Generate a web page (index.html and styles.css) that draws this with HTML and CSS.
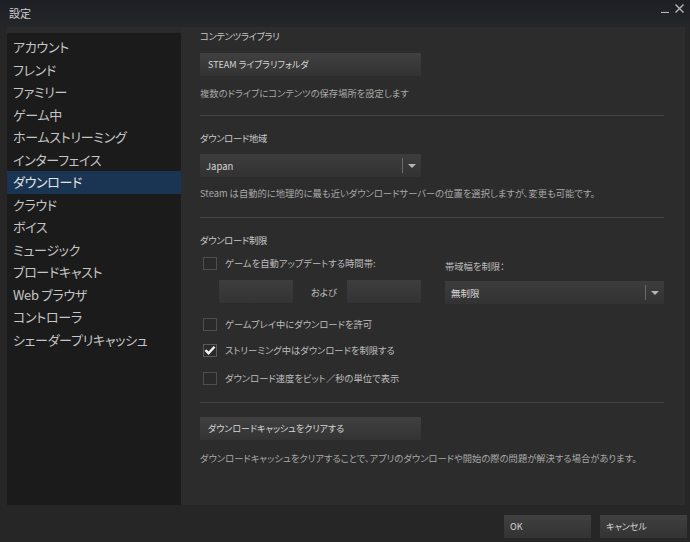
FILE: index.html
```html
<!DOCTYPE html>
<html lang="ja">
<head>
    <meta charset="UTF-8">
    <title>設定</title>
    <link rel="stylesheet" href="styles.css">
</head>
<body>
    <div class="window">
        <div class="titlebar">
            <span class="title">設定</span>
            <div class="win-btns">
                <svg width="9" height="9" viewBox="0 0 9 9"><path d="M0 8.5h8" stroke="#b8b8b8" stroke-width="1.2"/></svg>
                <svg width="9" height="9" viewBox="0 0 9 9"><path d="M0.5 0.5l8 8M8.5 0.5l-8 8" stroke="#b8b8b8" stroke-width="1.4"/></svg>
            </div>
        </div>

        <div class="main">
            <div class="sidebar">
                <div class="sidebar-top"></div>
                <ul class="menu">
                    <li>アカウント</li>
                    <li>フレンド</li>
                    <li>ファミリー</li>
                    <li>ゲーム中</li>
                    <li>ホームストリーミング</li>
                    <li>インターフェイス</li>
                    <li class="active">ダウンロード</li>
                    <li>クラウド</li>
                    <li>ボイス</li>
                    <li>ミュージック</li>
                    <li>ブロードキャスト</li>
                    <li>Web ブラウザ</li>
                    <li>コントローラ</li>
                    <li>シェーダープリキャッシュ</li>
                </ul>
            </div>

            <div class="content">
                <div class="heading">コンテンツライブラリ</div>
                <div class="btn wide-btn first-btn">STEAM ライブラリフォルダ</div>
                <div class="desc">複数のドライブにコンテンツの保存場所を設定します</div>
                <div class="rule"></div>

                <div class="heading">ダウンロード地域</div>
                <div class="select region-select">
                    <span>Japan</span>
                    <span class="select-arrow"></span>
                </div>
                <div class="desc">Steam は自動的に地理的に最も近いダウンロードサーバーの位置を選択しますが、変更も可能です。</div>
                <div class="rule"></div>

                <div class="heading">ダウンロード制限</div>
                <div class="limits">
                    <div class="limits-left">
                        <div class="check-row">
                            <span class="checkbox"></span>
                            ゲームを自動アップデートする時間帯:
                        </div>
                        <div class="time-row">
                            <span class="time-input"></span>
                            <span class="and">および</span>
                            <span class="time-input"></span>
                        </div>
                        <div class="check-row row2">
                            <span class="checkbox"></span>
                            ゲームプレイ中にダウンロードを許可
                        </div>
                        <div class="check-row row3">
                            <span class="checkbox checked">
                                <svg width="12" height="10" viewBox="0 0 12 10"><path d="M1.5 5.2l3 3 6-6.5" fill="none" stroke="#f2f2f2" stroke-width="2.4"/></svg>
                            </span>
                            ストリーミング中はダウンロードを制限する
                        </div>
                        <div class="check-row row4">
                            <span class="checkbox"></span>
                            ダウンロード速度をビット／秒の単位で表示
                        </div>
                    </div>
                    <div class="limits-right">
                        <div class="label">帯域幅を制限：</div>
                        <div class="select bw-select">
                            <span>無制限</span>
                            <span class="select-arrow"></span>
                        </div>
                    </div>
                </div>
                <div class="rule rule-bottom"></div>

                <div class="btn wide-btn cache-btn">ダウンロードキャッシュをクリアする</div>
                <div class="desc cache-desc">ダウンロードキャッシュをクリアすることで、アプリのダウンロードや開始の際の問題が解決する場合があります。</div>
            </div>
        </div>

        <div class="footer">
            <div class="btn footer-btn">OK</div>
            <div class="btn footer-btn">キャンセル</div>
        </div>
    </div>
</body>
</html>
```

FILE: styles.css
```css
* {
    margin: 0;
    padding: 0;
    box-sizing: border-box;
}

body {
    background: #262626;
    font-family: "Noto Sans CJK JP", "Noto Sans", sans-serif;
    font-feature-settings: "palt";
    color: #c4c4c4;
}

.window {
    width: 690px;
    height: 542px;
    display: flex;
    flex-direction: column;
    background: #262626;
}

.titlebar {
    height: 27px;
    flex-shrink: 0;
    display: flex;
    align-items: center;
    justify-content: space-between;
    padding: 0 6px 0 9px;
    background: linear-gradient(#1d1f24, #24262a);
}

.title {
    font-size: 11px;
    color: #d0d0d0;
    margin-top: -2px;
}

.win-btns {
    display: flex;
    gap: 5px;
    align-items: flex-end;
    margin-top: -10px;
}

.main {
    height: 478px;
    display: flex;
    padding: 0 5px 0 7px;
}

.sidebar {
    width: 174px;
    background: #1b1b1b;
    flex-shrink: 0;
}

.sidebar-top {
    height: 6px;
    background: #2a2a2a;
}

.menu {
    list-style: none;
    padding-top: 3px;
}

.menu li {
    height: 22.5px;
    line-height: 22.5px;
    padding-left: 6px;
    font-size: 13px;
    letter-spacing: -0.3px;
    color: #c6c6c6;
    white-space: nowrap;
}

.menu li.active {
    background: #1a3553;
    color: #e6e6e6;
}

.content {
    flex: 1;
    background: #2c2c2c;
    padding: 2px 21px 0 19px;
}

.heading,
.desc,
.label,
.check-row {
    font-size: 9.3px;
    line-height: 14px;
    white-space: nowrap;
}

.heading {
    color: #c8c8c8;
    letter-spacing: -0.3px;
}

.desc {
    color: #a8a8a8;
    margin-top: 10px;
}

.rule {
    height: 1px;
    background: #434343;
    margin: 15px 0 15px;
}

.btn {
    height: 23px;
    line-height: 23px;
    padding-left: 8px;
    font-size: 9px;
    color: #d6d6d6;
    background: linear-gradient(#404040, #333333);
}

.wide-btn {
    width: 221px;
}

.first-btn {
    margin-top: 10px;
}

.select {
    height: 23px;
    display: flex;
    align-items: center;
    justify-content: space-between;
    padding-left: 6px;
    font-size: 9.5px;
    color: #d6d6d6;
    background: linear-gradient(#3d3d3d, #323232);
}

.select-arrow {
    width: 19px;
    height: 15px;
    border-left: 1px solid #6a6a6a;
    position: relative;
}

.select-arrow::after {
    content: "";
    position: absolute;
    left: 5px;
    top: 6px;
    border-left: 4px solid transparent;
    border-right: 4px solid transparent;
    border-top: 4px solid #b4b4b4;
}

.region-select {
    width: 221px;
    margin-top: 9px;
}

.region-select + .desc {
    margin-top: 9px;
}

.region-select + .desc + .rule {
    margin-top: 17px;
}

.limits {
    display: flex;
}

.limits-left {
    width: 245px;
}

.check-row {
    display: flex;
    align-items: center;
    gap: 8px;
    color: #bdbdbd;
    margin-top: 9px;
    padding-left: 3px;
}

.checkbox {
    width: 14px;
    height: 13px;
    border: 1px solid #4e4e4e;
    background: #2a2a2a;
    display: flex;
    align-items: center;
    justify-content: center;
    flex-shrink: 0;
}

.checkbox.checked {
    border-color: #5a5a5a;
}

.time-row {
    display: flex;
    align-items: center;
    margin-top: 10px;
    padding-left: 19px;
}

.time-input {
    width: 74px;
    height: 23px;
    background: linear-gradient(#3e3e3e, #333333);
}

.and {
    width: 54px;
    padding-left: 8px;
    text-align: center;
    font-size: 9.3px;
    color: #bdbdbd;
}

.row2 {
    margin-top: 14px;
}

.row3 {
    margin-top: 12px;
}

.row4 {
    margin-top: 14px;
}

.limits-right {
    flex: 1;
    padding-top: 12px;
}

.label {
    color: #bdbdbd;
}

.bw-select {
    margin-top: 8px;
}

.rule-bottom {
    margin: 17px 0 14px;
}

.cache-desc {
    margin-top: 11px;
}

.footer {
    flex: 1;
    display: flex;
    justify-content: flex-end;
    gap: 9px;
    padding: 10px 3px 0 0;
}

.footer-btn {
    width: 87px;
    padding-left: 6px;
}
```
